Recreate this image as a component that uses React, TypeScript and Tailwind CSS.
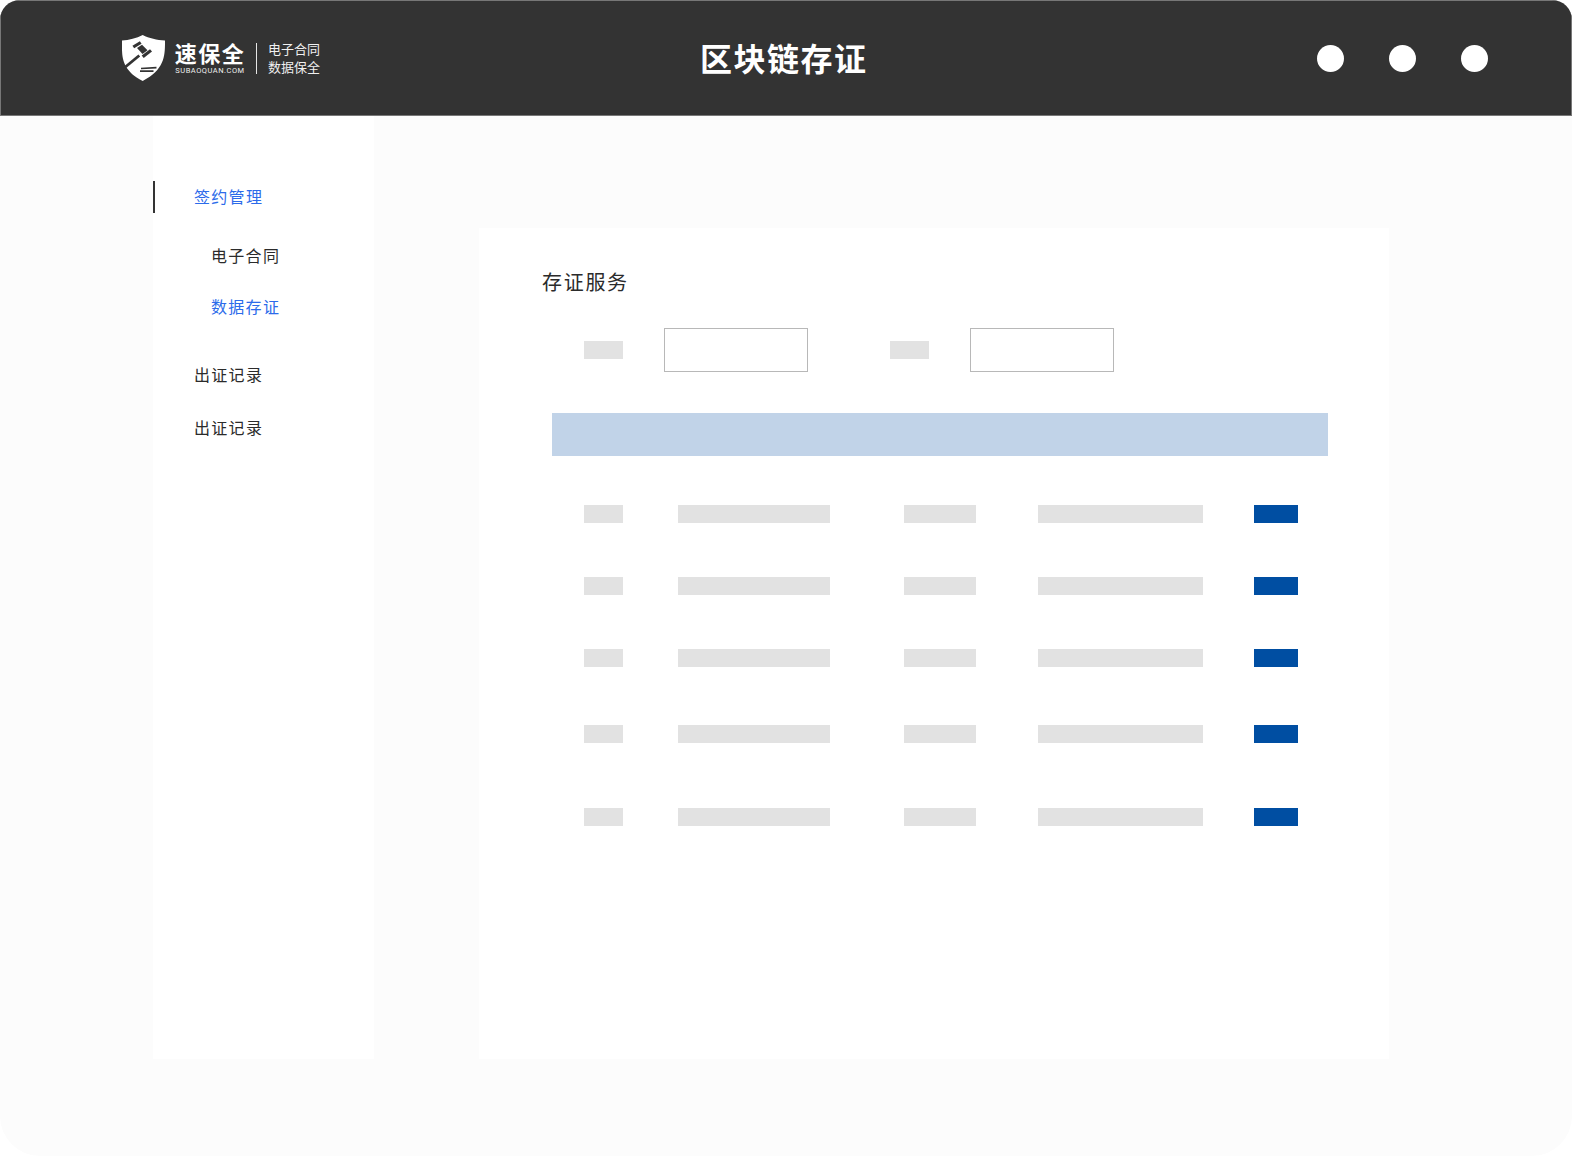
import React from "react";

const cjk = "font-['Noto_Sans_CJK_SC','Noto_Sans',sans-serif]";

const rows = ["mt-[49px]", "mt-[54px]", "mt-[54px]", "mt-[58px]", "mt-[65px]"];

const Logo = () => (
  <div className="flex w-[200px] shrink-0 items-center">
    <svg width="43" height="46" viewBox="0 0 43 47" preserveAspectRatio="none" className="-mt-px shrink-0">
      <path
        d="M20.700 0C27 3.200 35 5.500 43 5.500C43 20 43.500 35 20.700 47C-2 35 0 20 0 5.500C7 5.500 14.500 3.200 20.700 0Z"
        fill="#ffffff"
      />
      <g stroke="#333333" fill="none">
        <path d="M11.300 12.300L18.700 7.700" strokeWidth="3.200" />
        <path d="M20.700 22.300L29 15.700" strokeWidth="3.200" />
        <path d="M17.300 21L3.300 32.700" strokeWidth="2.800" />
        <path d="M19 34.200L34.500 33.400" strokeWidth="1.700" />
        <path d="M18 36.900H31.500" strokeWidth="1.700" />
      </g>
      <path d="M15 13.300L20 10L25.500 15.700L20.500 19.500Z" fill="#333333" />
    </svg>
    <div className="-mt-[2px] ml-[10px] flex w-[70px] shrink-0 flex-col items-center">
      <span className="text-[22px] leading-[26px] font-bold tracking-[1.500px] whitespace-nowrap text-white">速保全</span>
      <span className="mt-px font-['Roboto',sans-serif] text-[7.500px] leading-[10px] tracking-[0.500px] whitespace-nowrap text-[#eeeeee]">
        SUBAOQUAN.COM
      </span>
    </div>
    <div className="mr-[11px] ml-[11px] h-[31px] w-px shrink-0 bg-[#e5e5e5]" />
    <div className="flex shrink-0 flex-col text-[13px] leading-[18px] text-[#f0f0f0]">
      <span>电子合同</span>
      <span>数据保全</span>
    </div>
  </div>
);

const Dot = () => <div className="h-[27px] w-[27px] rounded-full bg-white" />;

const Gray = ({ className }: { className: string }) => <div className={`bg-[#e2e2e2] ${className}`} />;

const Sidebar = () => (
  <aside className="h-[943px] w-[221px] shrink-0 bg-white pt-[65px] text-[16px] leading-[32px] tracking-[1.300px] text-[#2b2b2b]">
    <div className="flex h-[32px] items-center border-l-2 border-[#333333] pb-[2px] pl-[39px] text-[#2c6bea]">签约管理</div>
    <div className="mt-[26px] pl-[58px]">电子合同</div>
    <div className="mt-[19px] pl-[58px] text-[#2c6bea]">数据存证</div>
    <div className="mt-[36px] pl-[41px]">出证记录</div>
    <div className="mt-[21px] pl-[41px]">出证记录</div>
  </aside>
);

const Panel = () => (
  <section className="mt-[112px] ml-[105px] h-[831px] w-[910px] bg-white pt-[39px]">
    <h2 className="pl-[63px] text-[20px] leading-[30px] font-normal tracking-[1.700px] text-[#2b2b2b]">存证服务</h2>
    <div className="mt-[31px] flex items-center pl-[105px]">
      <Gray className="h-[18px] w-[39px]" />
      <div className="ml-[41px] h-[44px] w-[144px] border border-[#b8b8b8] bg-white" />
      <Gray className="ml-[82px] h-[18px] w-[39px]" />
      <div className="ml-[41px] h-[44px] w-[144px] border border-[#b8b8b8] bg-white" />
    </div>
    <div className="mt-[41px] ml-[73px] h-[43px] w-[776px] bg-[#c1d3e8]" />
    {rows.map((mt, i) => (
      <div key={i} className={`flex pl-[105px] ${mt}`}>
        <Gray className="h-[18px] w-[39px]" />
        <Gray className="ml-[55px] h-[18px] w-[152px]" />
        <Gray className="ml-[74px] h-[18px] w-[72px]" />
        <Gray className="ml-[62px] h-[18px] w-[165px]" />
        <div className="ml-[51px] h-[18px] w-[44px] bg-[#004ea2]" />
      </div>
    ))}
  </section>
);

export default function App() {
  return (
    <div className={`h-[1156px] w-[1572px] overflow-hidden bg-white ${cjk}`}>
      <div className="h-full w-full overflow-hidden rounded-t-[20px] rounded-b-[40px] bg-[#fcfcfc]">
        <header className="flex h-[116px] items-center border border-[#777777] bg-[#333333] pr-[83px] pl-[121px]">
          <Logo />
          <h1 className="-mt-[3px] ml-[378px] text-[32px] leading-[40px] font-bold tracking-[1.500px] text-white">
            区块链存证
          </h1>
          <div className="ml-auto flex gap-[45px]">
            <Dot />
            <Dot />
            <Dot />
          </div>
        </header>
        <main className="flex pl-[153px]">
          <Sidebar />
          <Panel />
        </main>
      </div>
    </div>
  );
}
